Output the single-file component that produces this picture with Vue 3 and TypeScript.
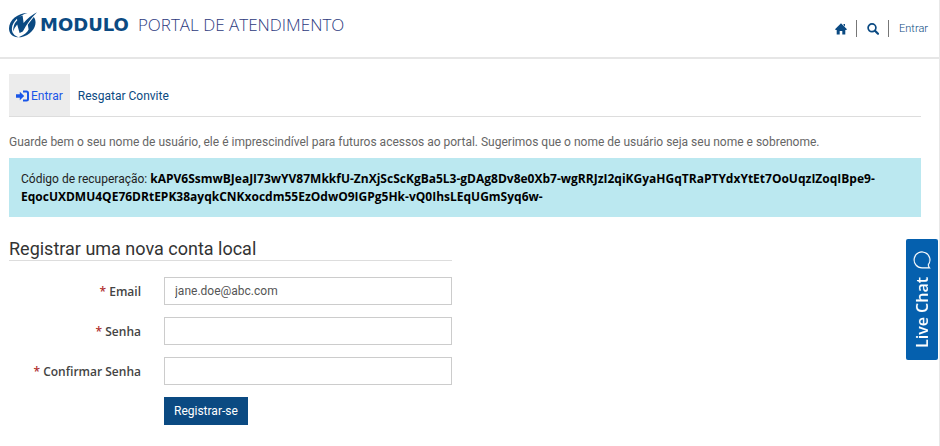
<script setup lang="ts">
import { ref } from 'vue'

interface Field {
  id: string
  label: string
  type: string
}

const fields: Field[] = [
  { id: 'email', label: 'Email', type: 'email' },
  { id: 'senha', label: 'Senha', type: 'password' },
  { id: 'confirmar', label: 'Confirmar Senha', type: 'password' },
]

const values = ref<Record<string, string>>({
  email: 'jane.doe@abc.com',
  senha: '',
  confirmar: '',
})

const code =
  'kAPV6SsmwBJeaJI73wYV87MkkfU-ZnXjScScKgBa5L3-gDAg8Dv8e0Xb7-wgRRJzI2qiKGyaHGqTRaPTYdxYtEt7OoUqzIZoqIBpe9-EqocUXDMU4QE76DRtEPK38ayqkCNKxocdm55EzOdwO9IGPg5Hk-vQ0IhsLEqUGmSyq6w-'
</script>

<template>
  <div class="page">
    <header class="header">
      <a class="brand" href="#">
        <svg class="mark" viewBox="0 0 28 26" aria-hidden="true">
          <path d="M18.500 1C9 1 0 8 0 16.500C0 21.800 4 25.600 9.500 25.200C5.200 23.800 2.600 20.800 2.900 16.300C3.400 9.500 10 3.500 18.500 1Z" />
          <path d="M7.500 5.600L13.600 3.600L14.600 11Q20 4.300 28 .2Q19.500 8.500 13.800 19.400L10.600 21L8.200 12.500Q5.400 15.500 4.200 19.500Q3.800 12.500 8.300 8.200Z" />
          <path d="M24.800 5C29.500 11.500 24.500 22.500 12 25.300L9.500 25.200C15 23.300 18.200 20.500 19.600 17.500L18.800 12.800Z" />
        </svg>
        <span class="wordmark">MODULO</span>
        <span class="portal">PORTAL DE ATENDIMENTO</span>
      </a>
      <nav class="links">
        <a href="#" aria-label="Início">
          <svg class="glyph" viewBox="0 0 12 12">
            <path d="M6 .3L12 6.200L11.200 7H10.300V11.500H7.300V8H4.700V11.500H1.700V7H.8L0 6.200ZM8.500 1H10V3.500L8.500 2Z" />
          </svg>
        </a>
        <a href="#" aria-label="Pesquisar">
          <svg class="glyph" viewBox="0 0 12 12">
            <circle cx="5" cy="4.800" r="3.900" fill="none" stroke="currentColor" stroke-width="1.700" />
            <path d="M8 7.700L11 10.700" stroke="currentColor" stroke-width="2.200" stroke-linecap="round" />
          </svg>
        </a>
        <a href="#">Entrar</a>
      </nav>
    </header>

    <main class="content">
      <nav class="tabs">
        <a class="tab active" href="#">
          <svg class="signin" viewBox="0 0 13 12" aria-hidden="true">
            <path d="M0 4.300H3.800V1.800L8.200 6L3.800 10.200V7.700H0Z" />
            <path d="M7 1.500H10.500Q12 1.500 12 3V9Q12 10.500 10.500 10.500H7" fill="none" stroke="currentColor" stroke-width="2" />
          </svg>
          Entrar
        </a>
        <a class="tab" href="#">Resgatar Convite</a>
      </nav>

      <p class="intro">
        Guarde bem o seu nome de usuário, ele é imprescindível para futuros acessos ao portal. Sugerimos que o nome de usuário seja seu nome e sobrenome.
      </p>

      <div class="notice">Código de recuperação: <strong>{{ code }}</strong></div>

      <form class="register" @submit.prevent>
        <h2>Registrar uma nova conta local</h2>
        <div v-for="field in fields" :key="field.id" class="row">
          <label :for="field.id"><span class="required">*</span> {{ field.label }}</label>
          <input :id="field.id" v-model="values[field.id]" :type="field.type" />
        </div>
        <div class="row">
          <button class="submit" type="submit">Registrar-se</button>
        </div>
      </form>
    </main>

    <button class="chat" type="button">
      <span>Live Chat</span>
      <svg viewBox="0 0 18 18" aria-hidden="true">
        <path d="M16.500 16.800H9A7.900 7.900 0 1 1 15.400 13.600Q15.300 15.500 16.500 16.800Z" />
      </svg>
    </button>
  </div>
</template>

<style>
body {
  background: #fff;
}
</style>

<style scoped>
* {
  box-sizing: border-box;
}

.page {
  min-height: 100vh;
  border-right: 1px solid #e8e8e8;
  font-family: Roboto, 'Open Sans', sans-serif;
  font-size: 12px;
  line-height: 17px;
  color: #666;
}

a {
  color: #0b4a82;
  text-decoration: none;
}

.header {
  display: flex;
  justify-content: space-between;
  height: 59px;
  padding: 0 11px 0 9px;
  border-bottom: 2px solid #e6e6e6;
}

.brand {
  display: flex;
  align-items: center;
  height: 49px;
}

.mark {
  width: 28px;
  height: 26px;
  margin-right: 3px;
  fill: #0b4a82;
}

.wordmark {
  font: bold 18px 'DejaVu Sans', sans-serif;
}

.portal {
  margin-left: 9px;
  font-family: 'Open Sans', sans-serif;
  font-size: 17px;
  font-weight: 300;
  color: #2d3a80;
}

.links {
  display: flex;
  align-items: center;
  height: 57px;
  font-size: 11px;
}

.links a {
  display: flex;
  align-items: center;
  height: 17px;
  padding: 0 9px 0 10px;
}

.links a + a {
  border-left: 1px solid #777;
}

.links a:last-child {
  padding-right: 0;
  font-weight: 300;
}

.glyph {
  width: 12px;
  height: 12px;
  fill: currentColor;
}

.content {
  padding: 15px 18px 0 9px;
}

.tabs {
  display: flex;
  border-bottom: 1px solid #ddd;
}

.tab {
  display: flex;
  align-items: center;
  height: 42px;
  padding: 2px 8px 0;
}

.tab.active {
  gap: 2px;
  padding: 2px 7px 0;
  background: #ececec;
  color: #1a56e8;
}

.signin {
  width: 13px;
  height: 12px;
  fill: currentColor;
}

.intro {
  margin: 17px 0 7px;
}

.notice {
  padding: 12px 12px 11px;
  background: #bbe8f0;
  color: #222;
  overflow-wrap: anywhere;
}

.notice strong {
  font-family: 'Open Sans', sans-serif;
  color: #000;
}

.register {
  max-width: 443px;
}

h2 {
  margin: 20px 0 16px;
  border-bottom: 1px solid #ddd;
  font-size: 18px;
  font-weight: 400;
  line-height: 23px;
  color: #333;
}

.row {
  display: flex;
  align-items: center;
  margin-bottom: 12px;
}

label {
  width: 132px;
  text-align: right;
  font-family: 'Open Sans', sans-serif;
  font-weight: 600;
  color: #444;
}

.required {
  color: #b03030;
}

input {
  flex: 1;
  min-width: 0;
  height: 28px;
  margin-left: 23px;
  padding: 0 10px;
  border: 1px solid #ccc;
  background: #fff;
  font: inherit;
  color: #555;
}

.submit {
  height: 28px;
  margin-left: 155px;
  padding: 0 10px;
  border: 0;
  background: #0b4a82;
  font: inherit;
  color: #fff;
}

.chat {
  position: fixed;
  top: 239px;
  right: 2px;
  display: flex;
  align-items: center;
  justify-content: center;
  gap: 8px;
  width: 32px;
  height: 121px;
  padding: 0;
  border: 0;
  border-radius: 2px;
  background: #0560ae;
  font: 600 16px/20px 'Open Sans', sans-serif;
  color: #fff;
  writing-mode: vertical-rl;
  transform: rotate(180deg);
}

.chat svg {
  width: 18px;
  height: 18px;
  transform: rotate(180deg);
  fill: none;
  stroke: #fff;
  stroke-width: 1.2;
}
</style>
